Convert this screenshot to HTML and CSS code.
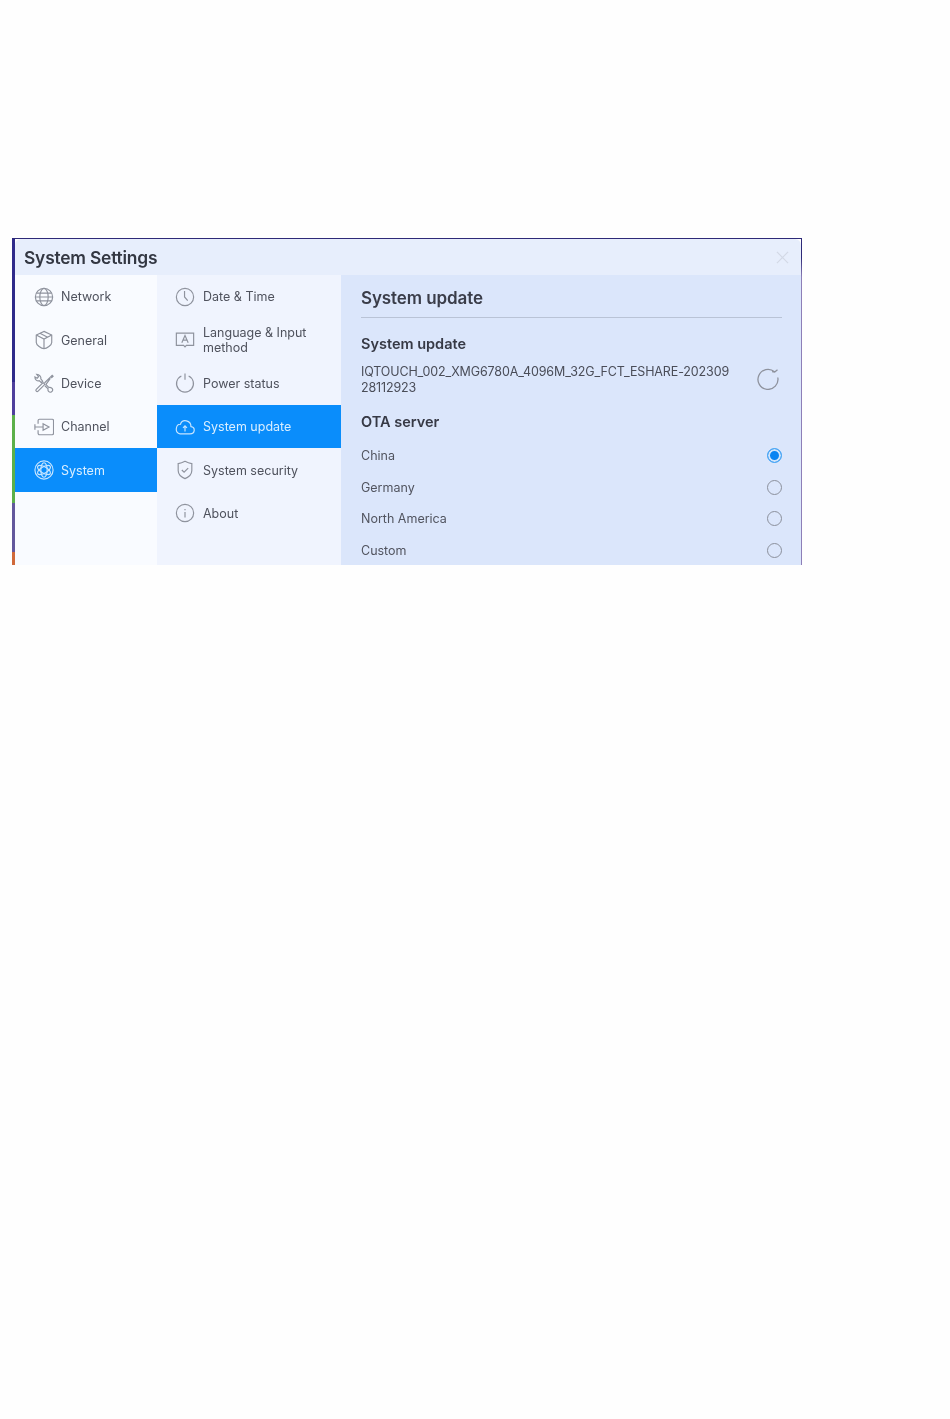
FILE: index.html
```html
<!DOCTYPE html>
<html lang="en">
<head>
<meta charset="utf-8">
<title>System Settings</title>
<link rel="stylesheet" href="styles.css">
</head>
<body>
<main class="window">
  <div class="sheet">
  <header class="titlebar">
    <h1>System Settings</h1>
    <svg class="close" viewBox="0 0 14 14"><path d="M1 1l12 12M13 1L1 13"/></svg>
  </header>
  <div class="panes">
    <nav class="col col-main">
      <a class="row"><svg class="ic" viewBox="0 0 22 22"><circle cx="11" cy="11" r="9.500"/><ellipse cx="11" cy="11" rx="4.600" ry="9.500"/><path d="M2.600 6.800h16.800M1.500 11h19M2.600 15.200h16.800"/></svg><span>Network</span></a>
      <a class="row"><svg class="ic" viewBox="0 0 22 22"><path d="M11 1.500l8.500 4v8.200c0 3-5.500 6.800-8.500 6.800s-8.500-3.800-8.500-6.800V5.500z"/><path d="M2.500 5.500l8.500 4.500 8.500-4.500M11 10v10.500M6.500 3.500l8.500 4.500"/></svg><span>General</span></a>
      <a class="row"><svg class="ic" viewBox="0 0 22 22"><path d="M10 10.500l2 2-7.500 7.500c-.6.6-1.400.6-2 0s-.6-1.400 0-2z"/><path d="M11.500 11L18 4.500M18 4.500l2-2 1 1-2 2M13 12.800L18 6"/><path d="M7.500 6.500c.6-2.500-1.500-5-4.500-5l2 2.500-1.500 1.800-2.500-1.500c-.2 3 2.300 5 5 4.200l2 2 1.500-1.500z"/><path d="M13 12.500l3.500 3.500c1.800-.5 4.500.7 4 3.200-.4 2-3 2.500-4.200 1.300-1-1-1.200-2-.8-3l-3.500-3.500"/></svg><span>Device</span></a>
      <a class="row"><svg class="ic" viewBox="0 0 22 22"><path d="M4.500 7.500V4c0-.8.700-1.500 1.500-1.500h14c.8 0 1.500.7 1.500 1.500v14c0 .8-.7 1.500-1.500 1.500H6c-.8 0-1.500-.7-1.500-1.500v-3.500"/><path d="M1 11h9M10 7.500l6.500 3.500-6.500 3.500z"/><path d="M1 8v6"/></svg><span>Channel</span></a>
      <a class="row active"><svg class="ic" viewBox="0 0 22 22"><circle cx="11" cy="11" r="10"/><ellipse cx="11" cy="11" rx="3.500" ry="8"/><ellipse cx="11" cy="11" rx="3.500" ry="8" transform="rotate(60 11 11)"/><ellipse cx="11" cy="11" rx="3.500" ry="8" transform="rotate(120 11 11)"/></svg><span>System</span></a>
    </nav>
    <nav class="col col-sub">
      <a class="row"><svg class="ic" viewBox="0 0 22 22"><circle cx="11" cy="11" r="9.500"/><path d="M10.500 4.500V11l3.500 4"/></svg><span>Date &amp; Time</span></a>
      <a class="row"><svg class="ic" viewBox="0 0 22 22"><path d="M1.500 3.500h19v13.500h-8l-1.500 1.500-1.500-1.500h-8z"/><path d="M7.500 14l3.500-8 3.500 8M8.800 11.200h4.400"/></svg><span>Language &amp; Input method</span></a>
      <a class="row"><svg class="ic" viewBox="0 0 22 22"><path d="M7 3.300a9.300 9.300 0 1 0 8 0M11 .5v7"/></svg><span>Power status</span></a>
      <a class="row active"><svg class="ic" viewBox="0 0 22 22"><path d="M5.500 18.500h11c6 0 6-7.500 1-8 .2-7-9.500-9-11.500-2.500-5.500-.2-6.500 10.200-.5 10.500z"/><path d="M11 16v-6M8.800 12l2.200-2.200 2.200 2.200"/></svg><span>System update</span></a>
      <a class="row"><svg class="ic" viewBox="0 0 22 22"><path d="M11 1.500c2.500 1.500 5 2.300 7.500 2.500v7.500c0 4-4 7.500-7.500 9-3.500-1.500-7.500-5-7.500-9V4c2.500-.2 5-1 7.500-2.500z"/><path d="M7.500 11l2.500 2.500 4.500-4.500"/></svg><span>System security</span></a>
      <a class="row"><svg class="ic" viewBox="0 0 22 22"><circle cx="11" cy="11" r="9.500"/><path d="M11 6.500v1.500M11 10v6"/></svg><span>About</span></a>
    </nav>
    <section class="detail">
      <h2 class="page-title">System update</h2>
      <h3 class="section first">System update</h3>
      <div class="version">
        <p>IQTOUCH_002_XMG6780A_4096M_32G_FCT_ESHARE-202309<br>28112923</p>
        <svg class="refresh" viewBox="0 0 22 22"><path d="M17.500 3.800A10 10 0 1 0 20.800 9.500M20.500 1.800l-2.800 2.200-2.700-.3"/></svg>
      </div>
      <h3 class="section">OTA server</h3>
      <ul class="options">
        <li><span>China</span><i class="radio on"></i></li>
        <li><span>Germany</span><i class="radio"></i></li>
        <li><span>North America</span><i class="radio"></i></li>
        <li><span>Custom</span><i class="radio"></i></li>
      </ul>
    </section>
  </div>
  </div>
</main>
</body>
</html>
```
FILE: styles.css
```css
* { box-sizing: border-box; }
html, body { margin: 0; padding: 0; }
body {
  background: #fefefe;
  height: 1419px;
  padding: 238px 0 0 12px;
  font-family: Inter, "Liberation Sans", sans-serif;
  color: #4a4d58;
}
.window {
  width: 790px;
  height: 327px;
  overflow: hidden;
  padding: 1px 1px 0 3px;
  background:
    linear-gradient(#2e2a78, #2e2a78) top / 100% 1px no-repeat,
    linear-gradient(#2e2a78 0 6%, #8d7fb8 12%) right / 1px 100% no-repeat,
    linear-gradient(#2f2a8a 0 44%, #4f3f9c 44% 54%, #5cb04a 54% 81%, #63589c 81% 96%, #d0693a 96%) left / 3px 100% no-repeat,
    #fefefe;
  filter: blur(0.4px);
}
.sheet {
  height: 100%;
  display: flex;
  flex-direction: column;
  overflow: hidden;
  border-radius: 6px 6px 0 0;
  background: #e7eefc;
}
.titlebar {
  height: 36px;
  flex: none;
  display: flex;
  align-items: center;
  justify-content: space-between;
  padding: 0 12px 0 9px;
}
h1 {
  margin: 0;
  font-size: 17.4px;
  font-weight: 600;
  letter-spacing: -0.2px;
  color: #333742;
}
.close { width: 13px; height: 13px; fill: none; stroke: #d3d9e6; stroke-width: 1.3; }
.panes { flex: 1; display: flex; min-height: 0; }
.col { display: flex; flex-direction: column; flex: none; }
.col-main { width: 142px; background: #f9fbff; }
.col-sub { width: 184px; background: #f0f4fe; }
.row {
  height: 43.33px;
  flex: none;
  display: flex;
  align-items: center;
  font-size: 12.5px;
  line-height: 15.5px;
  color: #4f525d;
}
.row span { padding-top: 1px; }
.col-main .row { padding-left: 19px; gap: 7px; }
.col-sub .row { padding-left: 18px; gap: 8px; padding-right: 20px; }
.ic {
  width: 20px;
  height: 20px;
  flex: none;
  fill: none;
  stroke: #8f939e;
  stroke-width: 1.3;
}
.row.active { background: #0a8dfb; color: #d9eeff; }
.row.active .ic { stroke: #c5e4ff; }
.detail {
  flex: 1;
  min-width: 0;
  background: #dbe6fb;
  padding: 0 19px 0 20px;
}
.page-title {
  margin: 0;
  height: 43px;
  line-height: 46px;
  font-size: 17px;
  font-weight: 600;
  color: #3a3d49;
  letter-spacing: -0.1px;
  border-bottom: 1px solid #b9c3d6;
}
.section {
  margin: 0;
  font-size: 14.5px;
  line-height: 18px;
  font-weight: 600;
  color: #363945;
}
.section.first { margin-top: 17px; }
.version {
  display: flex;
  align-items: center;
  justify-content: space-between;
  margin: 11px 3px 0 0;
  height: 32px;
}
.version p {
  margin: 0;
  font-size: 12.5px;
  line-height: 16px;
  letter-spacing: -0.13px;
  color: #4a4d58;
}
.refresh { width: 22px; height: 22px; margin-top: -2px; fill: none; stroke: #8e929d; stroke-width: 1.3; }
.version + .section { margin-top: 17px; }
.options { list-style: none; margin: 9px 0 0; padding: 0; }
.options li {
  height: 31.5px;
  display: flex;
  align-items: center;
  justify-content: space-between;
  font-size: 12.5px;
  color: #51545f;
}
.radio {
  width: 15px;
  height: 15px;
  border-radius: 50%;
  border: 1.3px solid #8b909c;
}
.radio.on {
  border-color: #4ba8f5;
  background: #0a84f2;
  box-shadow: inset 0 0 0 2px #d0e4fb;
}
```
